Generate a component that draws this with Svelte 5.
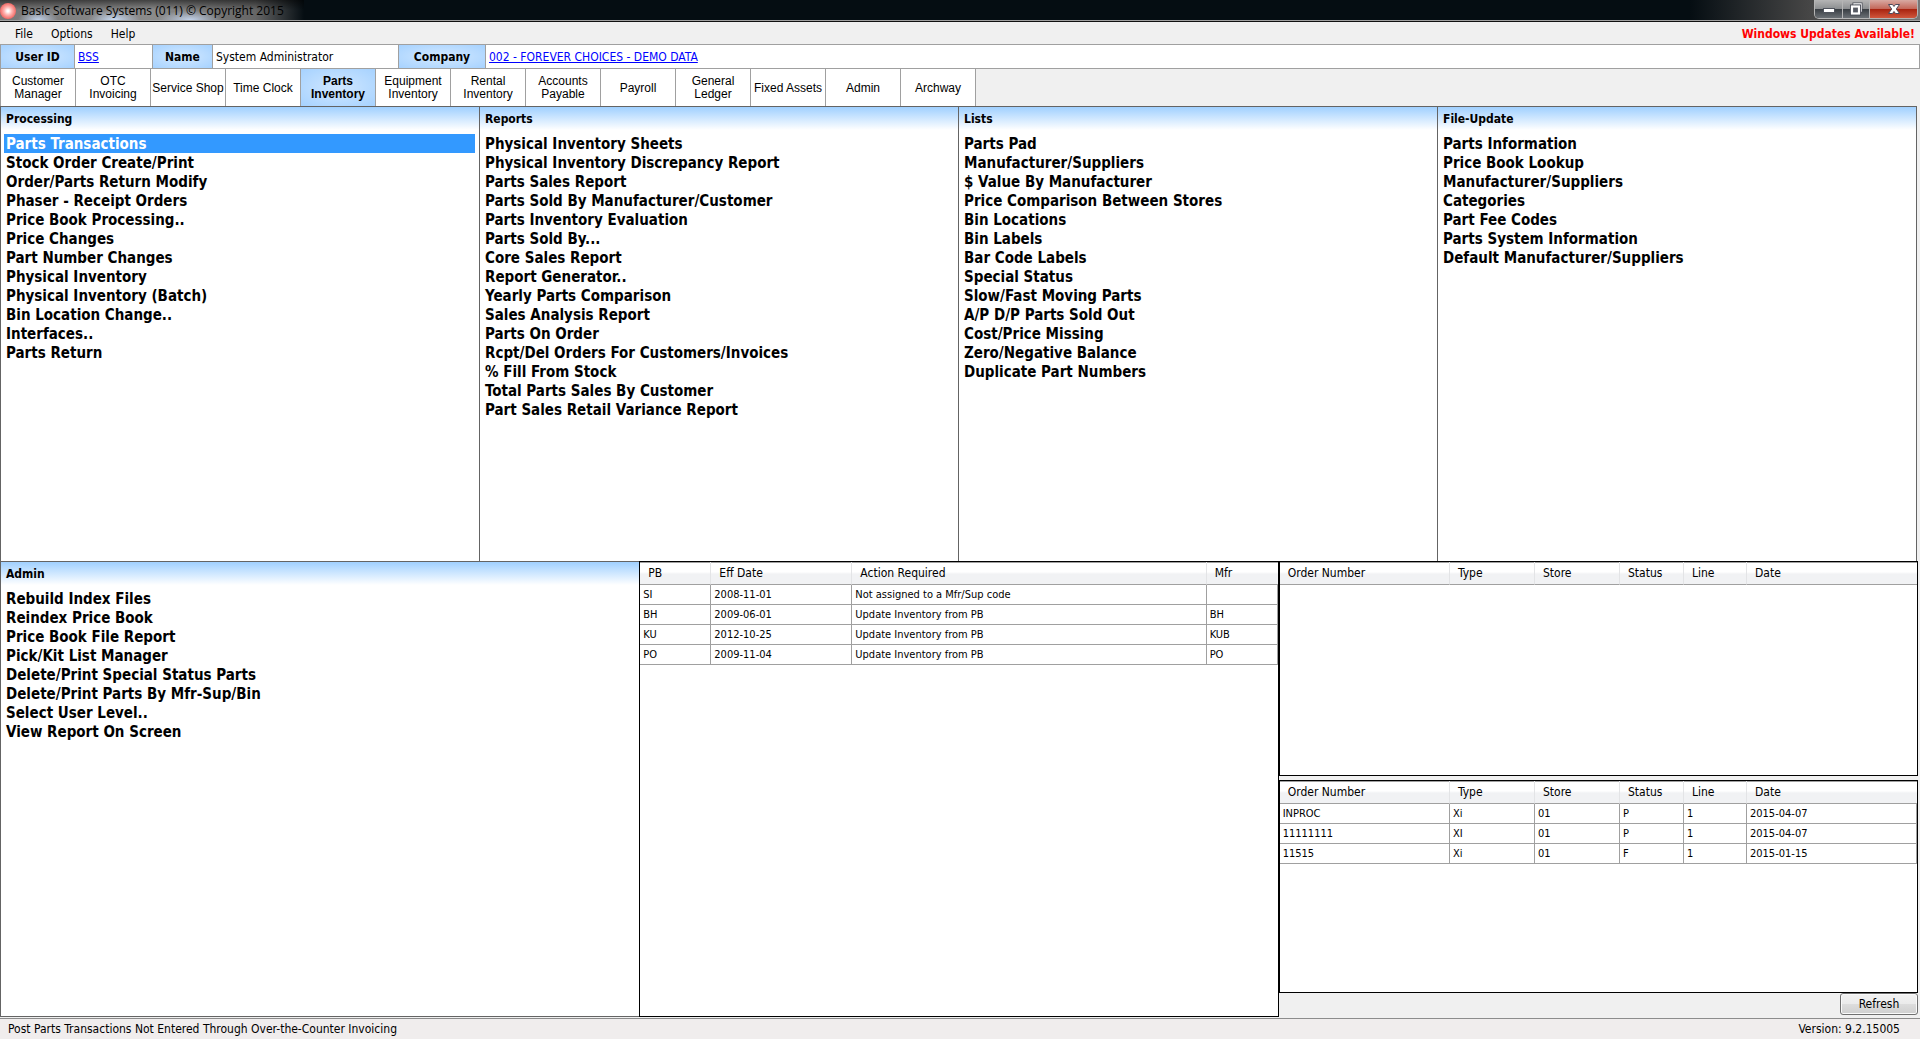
<script>
  const menus = ['File', 'Options', 'Help'];

  const tabs = [
    'Customer Manager', 'OTC Invoicing', 'Service Shop', 'Time Clock', 'Parts Inventory',
    'Equipment Inventory', 'Rental Inventory', 'Accounts Payable', 'Payroll',
    'General Ledger', 'Fixed Assets', 'Admin', 'Archway'
  ];
  let activeTab = $state('Parts Inventory');
  let selected = $state('Parts Transactions');

  const panels = [
    {
      title: 'Processing',
      items: [
        'Parts Transactions', 'Stock Order Create/Print', 'Order/Parts Return Modify',
        'Phaser - Receipt Orders', 'Price Book Processing..', 'Price Changes',
        'Part Number Changes', 'Physical Inventory', 'Physical Inventory (Batch)',
        'Bin Location Change..', 'Interfaces..', 'Parts Return'
      ]
    },
    {
      title: 'Reports',
      items: [
        'Physical Inventory Sheets', 'Physical Inventory Discrepancy Report', 'Parts Sales Report',
        'Parts Sold By Manufacturer/Customer', 'Parts Inventory Evaluation', 'Parts Sold By...',
        'Core Sales Report', 'Report Generator..', 'Yearly Parts Comparison',
        'Sales Analysis Report', 'Parts On Order', 'Rcpt/Del Orders For Customers/Invoices',
        '% Fill From Stock', 'Total Parts Sales By Customer', 'Part Sales Retail Variance Report'
      ]
    },
    {
      title: 'Lists',
      items: [
        'Parts Pad', 'Manufacturer/Suppliers', '$ Value By Manufacturer',
        'Price Comparison Between Stores', 'Bin Locations', 'Bin Labels', 'Bar Code Labels',
        'Special Status', 'Slow/Fast Moving Parts', 'A/P D/P Parts Sold Out',
        'Cost/Price Missing', 'Zero/Negative Balance', 'Duplicate Part Numbers'
      ]
    },
    {
      title: 'File-Update',
      items: [
        'Parts Information', 'Price Book Lookup', 'Manufacturer/Suppliers', 'Categories',
        'Part Fee Codes', 'Parts System Information', 'Default Manufacturer/Suppliers'
      ]
    }
  ];

  const adminPanel = {
    title: 'Admin',
    items: [
      'Rebuild Index Files', 'Reindex Price Book', 'Price Book File Report',
      'Pick/Kit List Manager', 'Delete/Print Special Status Parts',
      'Delete/Print Parts By Mfr-Sup/Bin', 'Select User Level..', 'View Report On Screen'
    ]
  };

  const priceBooks = {
    kind: 'books',
    columns: ['PB', 'Eff Date', 'Action Required', 'Mfr'],
    rows: [
      ['SI', '2008-11-01', 'Not assigned to a Mfr/Sup code', ''],
      ['BH', '2009-06-01', 'Update Inventory from PB', 'BH'],
      ['KU', '2012-10-25', 'Update Inventory from PB', 'KUB'],
      ['PO', '2009-11-04', 'Update Inventory from PB', 'PO']
    ]
  };

  const orderColumns = ['Order Number', 'Type', 'Store', 'Status', 'Line', 'Date'];
  const emptyOrders = { kind: 'orders', columns: orderColumns, rows: [] };
  const openOrders = {
    kind: 'orders',
    columns: orderColumns,
    rows: [
      ['INPROC', 'Xi', '01', 'P', '1', '2015-04-07'],
      ['11111111', 'XI', '01', 'P', '1', '2015-04-07'],
      ['11515', 'Xi', '01', 'F', '1', '2015-01-15']
    ]
  };
</script>

{#snippet listPanel(panel)}
  <section class="panel">
    <h2>{panel.title}</h2>
    <ul>
      {#each panel.items as item}
        <li>
          <button class="item" class:selected={item === selected} onclick={() => (selected = item)}>{item}</button>
        </li>
      {/each}
    </ul>
  </section>
{/snippet}

{#snippet dataTable(data)}
  <div class="grid-box">
    <table class={data.kind}>
      <thead>
        <tr>{#each data.columns as column}<th scope="col">{column}</th>{/each}</tr>
      </thead>
      <tbody>
        {#each data.rows as row}
          <tr>{#each row as cell}<td>{cell}</td>{/each}</tr>
        {/each}
      </tbody>
    </table>
  </div>
{/snippet}

<div class="window">
  <header class="titlebar">
    <div class="caption">
      <span class="orb"></span>
      <h1>Basic Software Systems (011) © Copyright 2015</h1>
    </div>
    <div class="controls">
      <button class="minimize" aria-label="Minimize">
        <svg width="14" height="14" viewBox="0 0 14 14"><rect x="1.5" y="6.5" width="11" height="4" fill="#fff" stroke="#50545d" /></svg>
      </button>
      <button class="restore" aria-label="Restore">
        <svg width="14" height="14" viewBox="0 0 14 14">
          <path d="M5 3V2h7v7h-1" fill="none" stroke="#474b55" stroke-width="3" />
          <path d="M5 3V2h7v7h-1" fill="none" stroke="#fff" stroke-width="1.4" />
          <rect x="3" y="4.500" width="7" height="7" fill="none" stroke="#474b55" stroke-width="4" />
          <rect x="3" y="4.500" width="7" height="7" fill="#565a63" stroke="#fff" stroke-width="2.200" />
        </svg>
      </button>
      <button class="close" aria-label="Close">
        <svg width="14" height="14" viewBox="0 0 14 14">
          <path d="M1.500 2.500h4L7 4.500l1.500-2h4L9.300 7l3.200 4.500h-4L7 9.500l-1.500 2h-4L4.700 7z" fill="#fff" stroke="#4d4a5a" />
        </svg>
      </button>
    </div>
  </header>

  <nav class="menubar">
    {#each menus as menu}<button>{menu}</button>{/each}
    <strong>Windows Updates Available!</strong>
  </nav>

  <dl class="session">
    <dt>User ID</dt>
    <dd><a href="#user">BSS</a></dd>
    <dt>Name</dt>
    <dd>System Administrator</dd>
    <dt>Company</dt>
    <dd><a href="#company">002 - FOREVER CHOICES - DEMO DATA</a></dd>
  </dl>

  <nav class="tabs">
    {#each tabs as tab}
      <button class:active={tab === activeTab} onclick={() => (activeTab = tab)}>{tab}</button>
    {/each}
  </nav>

  <main>
    <div class="top">
      {#each panels as panel}{@render listPanel(panel)}{/each}
    </div>
    <div class="bottom">
      {@render listPanel(adminPanel)}
      {@render dataTable(priceBooks)}
      <div class="orders-column">
        {@render dataTable(emptyOrders)}
        {@render dataTable(openOrders)}
        <button class="refresh">Refresh</button>
      </div>
    </div>
  </main>

  <footer>
    <span>Post Parts Transactions Not Entered Through Over-the-Counter Invoicing</span>
    <span>Version: 9.2.15005</span>
  </footer>
</div>

<style>
  :global(body) {
    margin: 0;
  }

  .window {
    display: flex;
    flex-direction: column;
    min-height: 100vh;
    background: #f0f0f0;
    color: #000;
    font-family: Tahoma, 'DejaVu Sans Condensed', 'DejaVu Sans', sans-serif;
    font-size: 12px;
    line-height: 16px;
  }

  .window *,
  .window {
    box-sizing: border-box;
  }

  button {
    margin: 0;
    padding: 0;
    border: 0;
    background: none;
    color: inherit;
    font: inherit;
  }

  /* Title bar */
  .titlebar {
    display: flex;
    justify-content: space-between;
    height: 22px;
    border-bottom: 1px solid #111;
    box-shadow: inset 0 -1px #a0a0a0;
    background: linear-gradient(90deg, #050d12 0 88%, #444 94%, #777 100%);
  }

  .caption {
    display: flex;
    align-items: center;
    height: 20px;
    padding: 2px 20px 0 0;
    background:
      radial-gradient(ellipse 20px 10px at 38px 20px, #c2d2ea, transparent),
      radial-gradient(ellipse 26px 10px at 114px 20px, #c9dcf5, transparent),
      radial-gradient(ellipse 32px 10px at 190px 20px, #c2d2ea, transparent),
      linear-gradient(#0008, transparent 50%),
      linear-gradient(90deg, #777 0, #8b8b8b 50%, #666 84%, #050d12 100%);
  }

  .orb {
    width: 16px;
    height: 16px;
    margin-right: 5px;
    border-radius: 8px;
    background: radial-gradient(circle, #fff 0 8%, #ffb4b0 35%, #f0605c 75%, #d84844);
  }

  h1 {
    margin: 0;
    font-family: 'Segoe UI', 'Open Sans', sans-serif;
    font-size: 12px;
    font-weight: 400;
    white-space: nowrap;
  }

  .controls {
    display: flex;
    height: 19px;
    margin-right: 2px;
    border: 1px solid #b5b5b5;
    border-top: 0;
    border-radius: 0 0 5px 5px;
    overflow: hidden;
  }

  .controls button {
    display: flex;
    align-items: center;
    justify-content: center;
    width: 28px;
    border-right: 1px solid #b5b5b5;
    background: linear-gradient(#b5b5b5, #8d8f91 48%, #3a3f44 52%, #6b7075);
  }

  .controls .restore {
    width: 27px;
  }

  .controls .close {
    width: 47px;
    border-right: 0;
    background: linear-gradient(#d8aaa2, #c4685a 48%, #a82410 52%, #d0563c);
  }

  /* Menu bar */
  .menubar {
    display: flex;
    align-items: center;
    gap: 18px;
    height: 22px;
    padding: 2px 5px 0 15px;
  }

  .menubar strong {
    margin-left: auto;
    color: #f00;
  }

  /* Session row */
  .session {
    display: grid;
    grid-template-columns: 74px 77px 61px 185px 88px 1fr;
    height: 25px;
    margin: 0;
    border: 1px solid #a0a0a0;
    background: #fff;
  }

  .session dt,
  .session dd {
    margin: 0;
    padding: 1px 3px 0;
    line-height: 23px;
    white-space: nowrap;
  }

  .session dt {
    border: solid #a0a0a0;
    border-width: 0 1px;
    background: radial-gradient(ellipse at center, #d4e9ff, #a6d2ff);
    font-weight: 700;
    line-height: 22px;
    text-align: center;
  }

  .session dd {
    line-height: 22px;
  }

  .session dt:first-child {
    border-left: 0;
  }

  .session a {
    color: #00f;
  }

  /* Module tabs */
  .tabs {
    display: flex;
    height: 37px;
    border-left: 1px solid #a0a0a0;
  }

  .tabs button {
    width: 75px;
    padding: 1px 8px 0;
    border-right: 1px solid #a0a0a0;
    background: #fff;
    font-family: 'Liberation Sans', Arial, sans-serif;
    font-size: 12px;
    line-height: 13px;
  }

  .tabs button:nth-child(3),
  .tabs button:nth-child(4),
  .tabs button:nth-child(11) {
    padding: 1px 0 0;
  }

  .tabs .active {
    background: radial-gradient(ellipse at center, #d0e7ff, #a6d2ff);
    font-weight: 700;
  }

  /* Work area */
  main {
    display: grid;
    grid-template-rows: 455fr 456fr;
    flex: 1;
    padding-right: 2px;
  }

  .top {
    display: grid;
    grid-template-columns: repeat(4, 1fr);
    margin-right: 1px;
    border-right: 1px solid #646464;
  }

  .bottom {
    display: grid;
    grid-template-columns: repeat(3, 1fr);
  }

  .panel {
    border: solid #646464;
    border-width: 1px 0 0 1px;
    background: linear-gradient(#a0d0ff, #fff 23px);
  }

  .bottom .panel {
    border-bottom-width: 1px;
  }

  h2 {
    margin: 0;
    padding: 4px 5px 3px;
    font-size: 12px;
    line-height: 16px;
  }

  ul {
    margin: 0;
    padding: 4px 4px 0 3px;
    list-style: none;
  }

  .item {
    display: block;
    width: 100%;
    height: 19px;
    padding: 1px 2px 0;
    font-size: 15px;
    font-weight: 700;
    line-height: 18px;
    text-align: left;
    white-space: nowrap;
  }

  .item.selected {
    background: #3399ff;
    color: #fff;
  }

  /* Data grids */
  .grid-box {
    border: 1px solid #000;
    background: #fff;
  }

  table {
    width: 100%;
    border-collapse: separate;
    border-spacing: 0;
    table-layout: fixed;
  }

  th {
    height: 23px;
    padding: 0 8px;
    border-right: 1px solid #e3e4e6;
    border-bottom: 1px solid #a0a0a0;
    background: linear-gradient(#fff 45%, #f1f2f4 55%, #f1f2f4);
    box-shadow: inset 0 1px #a0a0a0;
    font-weight: 400;
    text-align: left;
  }

  td {
    height: 20px;
    padding: 1px 3px 0;
    border: solid #a0a0a0;
    border-width: 0 1px 1px 0;
    font-size: 11px;
    line-height: 14px;
  }

  th:last-child {
    border-right: 0;
  }

  .books th:nth-child(1) { width: 71px; }
  .books th:nth-child(2) { width: 141px; }
  .books th:nth-child(4) { width: 71px; }

  .orders th:nth-child(2),
  .orders th:nth-child(3) { width: 85px; }
  .orders th:nth-child(4) { width: 64px; }
  .orders th:nth-child(5) { width: 63px; }
  .orders th:nth-child(6) { width: 170px; }

  .orders-column {
    display: grid;
    grid-template-rows: 216fr 213fr auto;
    row-gap: 4px;
  }

  .refresh {
    justify-self: end;
    width: 78px;
    height: 22px;
    margin: -4px 0 2px;
    border: 1px solid #707070;
    border-radius: 3px;
    background: linear-gradient(#f2f2f2, #ebebeb 49%, #dddddd 51%, #cfcfcf);
    box-shadow: inset 0 0 0 1px #fafafa;
  }

  /* Status bar */
  footer {
    display: flex;
    justify-content: space-between;
    height: 22px;
    margin-top: 1px;
    padding: 2px 20px 0 8px;
    border-top: 1px solid #8c8c8c;
    border-bottom: 1px solid #fff;
    background: #f0eded;
  }
</style>
